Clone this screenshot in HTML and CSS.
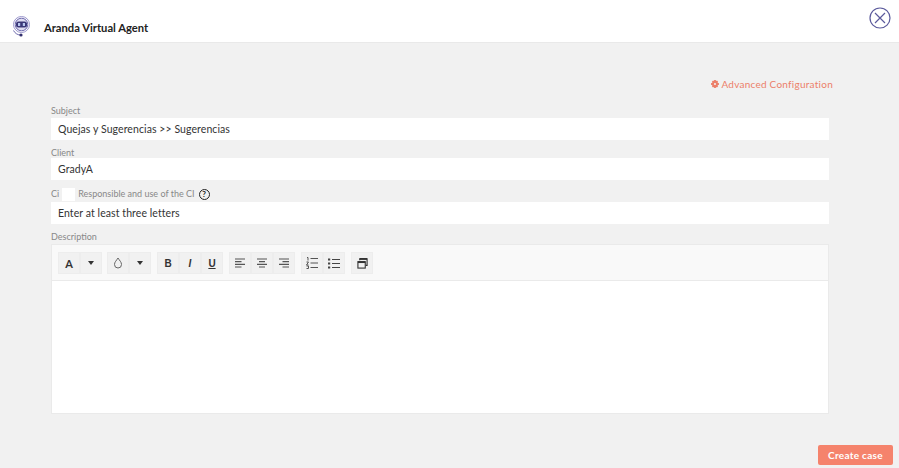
FILE: index.html
```html
<!DOCTYPE html>
<html lang="en">
<head>
<meta charset="utf-8">
<title>Aranda Virtual Agent</title>
<link rel="stylesheet" href="styles.css">
</head>
<body>
<header class="top">
  <div class="brand">
    <svg class="logo" width="22" height="22" viewBox="0 0 22 22" fill="none">
      <circle cx="10.500" cy="8.500" r="8" stroke="#9a96cc" stroke-width="1"/>
      <circle cx="10.500" cy="8.500" r="6.300" fill="#dedcf1" stroke="#6c68ad" stroke-width="1"/>
      <rect x="5" y="5.500" width="11" height="6" rx="2.500" fill="#3a3778"/>
      <rect x="7" y="7" width="2.200" height="3" fill="#b9c6ee"/>
      <rect x="11.800" y="7" width="2.200" height="3" fill="#b9c6ee"/>
      <path d="M2.500 14.500C4 17.500 7 19.200 10 19" stroke="#6c68ad" stroke-width="1"/>
      <circle cx="10" cy="19" r="1.600" fill="#33306e"/>
    </svg>
    <h1 class="title">Aranda Virtual Agent</h1>
  </div>
  <button class="close" aria-label="Close">
    <svg width="22" height="22" viewBox="0 0 22 22" fill="none" stroke="#5b5a9c" stroke-width="1.200">
      <circle cx="11" cy="11" r="10"/>
      <path d="M6 6L16 16M16 6L6 16"/>
    </svg>
  </button>
</header>

<main class="main">
  <div class="advanced">
    <svg width="8" height="8" viewBox="0 0 10 10" fill="#ec7f69"><path d="M4 0h2l.3 1.400 1.200-.7 1.400 1.400-.7 1.200L10 4v2l-1.800.7.7 1.200-1.400 1.400-1.200-.7L6 10H4l-.3-1.400-1.200.7L1.100 7.900l.7-1.200L0 6V4l1.800-.7-.7-1.200L2.500.7l1.200.7z"/><circle cx="5" cy="5" r="1.300" fill="#f1f1f1"/></svg>
    <span>Advanced Configuration</span>
  </div>

  <form class="form">
    <label class="label label-subject">Subject</label>
    <div class="input">Quejas y Sugerencias &gt;&gt; Sugerencias</div>
    <label class="label label-client">Client</label>
    <div class="input">GradyA</div>
    <div class="label ci-row">
      <span>Ci</span>
      <span class="check"></span>
      <span>Responsible and use of the CI</span>
      <span class="help">?</span>
    </div>
    <div class="input">Enter at least three letters</div>
    <label class="label label-desc">Description</label>
    <div class="editor">
      <div class="toolbar">
        <div class="group group-first">
          <span class="tool"><b class="glyph-a">A</b></span>
          <span class="tool"><i class="caret"></i></span>
        </div>
        <div class="group">
          <span class="tool"><svg width="10" height="12" viewBox="0 0 10 12" fill="none" stroke="#666" stroke-width="1"><path d="M5 1C3.500 3.500 1.500 5 1.500 7.500a3.500 3.500 0 0 0 7 0C8.500 5 6.500 3.500 5 1z"/></svg></span>
          <span class="tool"><i class="caret"></i></span>
        </div>
        <div class="group">
          <span class="tool"><b class="glyph">B</b></span>
          <span class="tool"><em class="glyph">I</em></span>
          <span class="tool"><u class="glyph">U</u></span>
        </div>
        <div class="group">
          <span class="tool"><svg width="10" height="10" viewBox="0 0 10 10" stroke="#555" stroke-width="1.200"><path d="M0 1h10M0 3.700h6.500M0 6.300h10M0 9h6.500"/></svg></span>
          <span class="tool"><svg width="10" height="10" viewBox="0 0 10 10" stroke="#555" stroke-width="1.200"><path d="M0 1h10M2 3.700h6M0 6.300h10M2 9h6"/></svg></span>
          <span class="tool"><svg width="10" height="10" viewBox="0 0 10 10" stroke="#555" stroke-width="1.200"><path d="M0 1h10M3.500 3.700H10M0 6.300h10M3.500 9H10"/></svg></span>
        </div>
        <div class="group">
          <span class="tool"><svg width="12" height="12" viewBox="0 0 12 12" stroke="#555" stroke-width="1" fill="none"><path d="M4.500 1.500H12M4.500 6H12M4.500 10.500H12M1 .5h1v3M.5 5h2L.5 8h2M.5 9h2v2.500h-2"/></svg></span>
          <span class="tool"><svg width="12" height="11" viewBox="0 0 12 11" stroke="#444" stroke-width="1" fill="none"><path d="M4 1.500h8M4 5.500h8M4 9.500h8"/><path d="M0 1.500h2.200M0 5.500h2.200M0 9.500h2.200" stroke-width="2.200"/></svg></span>
        </div>
        <div class="group">
          <span class="tool"><svg width="11" height="11" viewBox="0 0 12 12" stroke="#333" fill="none"><path d="M3 2.500V1h8v7H9.500" stroke-width="1.200"/><path d="M3 1h8" stroke-width="2"/><rect x="1" y="4" width="8" height="7" stroke-width="1.200"/><path d="M1 4.500h8" stroke-width="2"/></svg></span>
        </div>
      </div>
      <div class="body"></div>
    </div>
  </form>

  <div class="actions">
    <button class="create" type="button">Create case</button>
  </div>
</main>
</body>
</html>
```
FILE: styles.css
```css
* { box-sizing: border-box; }
html, body { margin: 0; height: 100%; }
body {
  width: 899px;
  height: 468px;
  overflow: hidden;
  background: #f1f1f1;
  font-family: "Lato", "Liberation Sans", sans-serif;
  display: flex;
  flex-direction: column;
}
.top {
  height: 43px;
  flex: none;
  background: #fff;
  border-bottom: 1px solid #e9e9e9;
  display: flex;
  justify-content: space-between;
  padding: 7px 8px 0 11px;
}
.brand { display: flex; align-items: center; height: 22px; margin-top: 9px; }
.logo { margin-right: 11px; }
.title { margin: 0; font-size: 11.200px; font-weight: 700; color: #222; font-family: "Lato", sans-serif; }
.close { background: none; border: 0; padding: 0; height: 22px; display: block; }
.main { flex: 1; padding: 35px 6px 3px 51px; display: flex; flex-direction: column; }
.advanced {
  align-self: flex-end;
  margin-right: 60px;
  display: flex;
  align-items: center;
  gap: 2px;
  height: 12px;
  font-size: 10px;
  color: #ec7f69;
  letter-spacing: .25px;
}
.form { width: 778px; margin-top: 14px; display: flex; flex-direction: column; }
.label { display: block; height: 12px; font-size: 9px; line-height: 14px; color: #888; }
.label-subject { margin-bottom: 2px; }
.label-client { margin-top: 6px; }
.label-desc { margin-top: 6px; margin-bottom: 2px; }
.input {
  height: 22px;
  background: #fff;
  padding-left: 7px;
  font-size: 10.500px;
  line-height: 22px;
  color: #333;
  letter-spacing: .08px;
}
.ci-row { display: flex; align-items: center; height: 16px; line-height: 12px; margin-top: 6px; }
.check { width: 13px; height: 13px; background: #fff; margin: 0 3px 0 3px; }
.help {
  width: 11px;
  height: 11px;
  margin-left: 4px;
  border: 1.200px solid #222;
  border-radius: 50%;
  font-size: 8px;
  font-weight: 700;
  line-height: 9px;
  text-align: center;
  color: #222;
}
.editor { height: 170px; background: #fff; border: 1px solid #eaeaea; display: flex; flex-direction: column; }
.toolbar {
  height: 36px;
  flex: none;
  background: #f9f9f9;
  border-bottom: 1px solid #eaeaea;
  display: flex;
  gap: 6px;
  padding: 7px 0 0 6px;
}
.body { flex: 1; }
.group { display: flex; height: 22px; }
.group-first { margin-right: -1px; }
.tool {
  width: 22px;
  height: 22px;
  background: #f1f1f1;
  border: 1px solid #ededed;
  display: flex;
  align-items: center;
  justify-content: center;
  color: #333;
}
.glyph-a { font-size: 11px; color: #333; }
.glyph { font-size: 10px; font-family: "Liberation Sans", sans-serif; color: #333; font-weight: 700; }
.caret { width: 0; height: 0; border: 3.500px solid transparent; border-top: 4.500px solid #333; border-bottom: 0; }
.actions { margin-top: auto; display: flex; justify-content: flex-end; }
.create {
  width: 75px;
  height: 20px;
  background: #f5836c;
  border: 0;
  border-radius: 2px;
  padding: 0;
  font: 700 10px "Lato", sans-serif;
  color: #fff;
  letter-spacing: .3px;
}
```
